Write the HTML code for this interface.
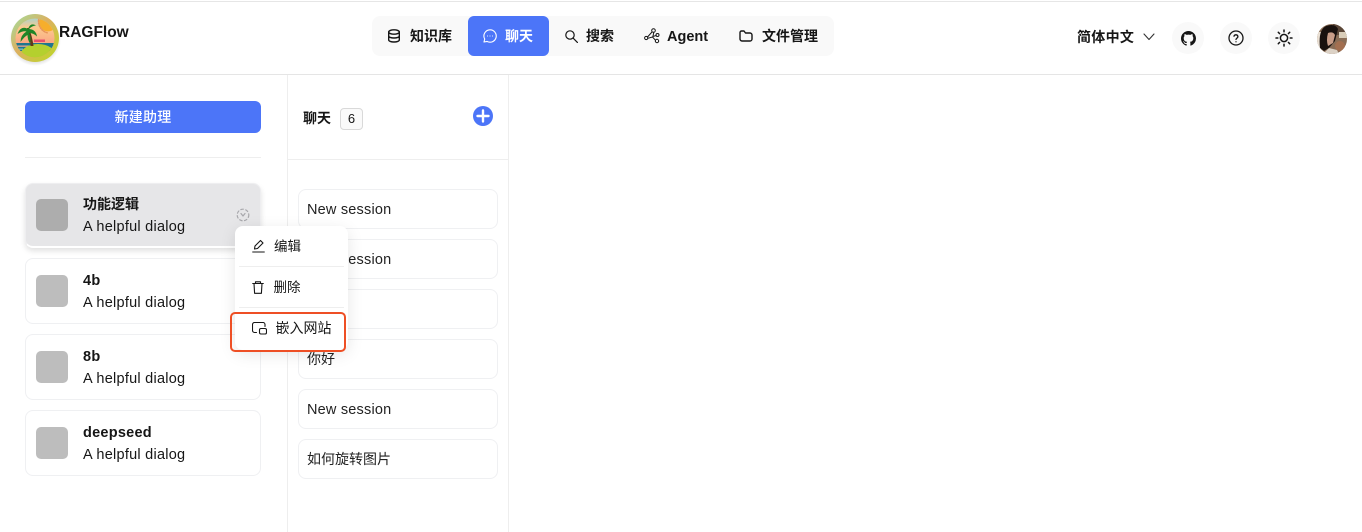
<!DOCTYPE html>
<html lang="zh"><head><meta charset="utf-8"><style>
*{box-sizing:border-box}
html,body{margin:0;padding:0}
body{position:relative;width:1362px;height:532px;overflow:hidden;background:#fff;color:#161616;font-family:"Liberation Sans","Noto Sans CJK SC",sans-serif;font-size:14px}
.a{position:absolute}
.t{position:absolute;white-space:nowrap;line-height:20px}
.b{font-weight:700}
.l{font-size:14.500px;letter-spacing:.25px;margin-top:1px}
.card{position:absolute;left:25px;width:236px;height:66px;background:#fff;border:1px solid #eff0f2;border-radius:8px}
.sq{position:absolute;left:36px;width:32px;height:32px;border-radius:5px;background:#bdbdbd}
.ses{position:absolute;left:298px;width:200px;height:40px;border:1px solid #eff0f2;border-radius:8px;background:#fff;padding-left:8px;line-height:38px;font-size:14px;color:#222}
.sl{font-size:14.500px;letter-spacing:.2px;line-height:40px}
.rb{position:absolute;top:22px;width:32px;height:32px;border-radius:50%;background:#f9f9f9}
svg{position:absolute;fill:none;stroke:#161616;stroke-width:1.4;stroke-linecap:round;stroke-linejoin:round}
</style></head><body>
<div class="a" style="left:0;top:1px;width:1362px;height:1px;background:#e6e6e6"></div>
<div class="a" style="left:0;top:74px;width:1362px;height:1px;background:#e5e5e5"></div>

<svg style="left:9px;top:12px;stroke:none" width="52" height="54" viewBox="0 0 52 54">
<defs><linearGradient id="g" x1="0" y1="0" x2="1" y2="1"><stop offset="0" stop-color="#a0dfa0"/><stop offset=".45" stop-color="#dcb060"/><stop offset="1" stop-color="#b9dc20"/></linearGradient>
<linearGradient id="s" x1="0" y1="0" x2="0" y2="1"><stop offset="0" stop-color="#78d6ee"/><stop offset=".3" stop-color="#fccb8e"/><stop offset=".75" stop-color="#f9967e"/></linearGradient>
<clipPath id="c"><circle cx="26" cy="26" r="19.500"/></clipPath>
<radialGradient id="sh"><stop offset=".8" stop-color="#000" stop-opacity=".14"/><stop offset="1" stop-color="#000" stop-opacity="0"/></radialGradient></defs>
<circle cx="26" cy="28" r="26" fill="url(#sh)"/>
<circle cx="26" cy="26" r="24" fill="url(#g)"/>
<g clip-path="url(#c)"><rect x="0" y="0" width="52" height="52" fill="url(#s)"/>
<path d="M32 5a9 9 0 0 0 12 13l2-14z" fill="#f6ae2c"/>
<path d="M30 6a12 12 0 0 0 9 15" stroke="#e8955a" stroke-width="1.600" stroke-dasharray="1 1.500" fill="none"/>
<rect x="0" y="31" width="52" height="8" fill="#1f7690"/><rect x="0" y="33.500" width="20" height="1.300" fill="#e8a890"/><rect x="0" y="36.500" width="14" height="1.300" fill="#7fc0c8"/>
<ellipse cx="29" cy="44" rx="18" ry="12" fill="#b4d02e"/>
<rect x="25" y="27.500" width="11" height="2.500" fill="#e8506c"/>
<path d="M18 16q3 9 3.500 18l3 0q-1.500-11-4.800-18z" fill="#5f3a18"/>
<path d="M19 17q-7-4-10.500 5q5.500-3.500 9-2.500q-6 3.500-6 10.500q4.500-6 7-7q0 4.500 2.500 8.500q1.500-6-1-10.500q4.500 0 8 3.500q-1-7-8-7.500q3.500-3.500 7-3.500q-5.500-3.500-8 3.500z" fill="#1f8526"/></g>
</svg>
<div class="t b" style="left:59px;top:23px;font-size:15.500px">RAGFlow</div>

<div class="a" style="left:372px;top:16px;width:462px;height:40px;background:#f9f9f9;border-radius:8px"></div>
<div class="a" style="left:468px;top:16px;width:81px;height:40px;background:#4c75f8;border-radius:6px"></div>
<svg style="left:387px;top:29px" width="14" height="14" viewBox="0 0 14 14"><ellipse cx="7" cy="3" rx="5.300" ry="2.200"/><path d="M1.700 3v8c0 1.100 2.400 2 5.300 2s5.300-.9 5.300-2V3M1.700 7c0 1.100 2.400 2 5.300 2s5.300-.9 5.300-2"/></svg>
<div class="t b" style="left:410px;top:26px">知识库</div>
<svg style="left:483px;top:29px;stroke:#fff;stroke-width:1.100" width="14" height="14" viewBox="0 0 14 14"><path d="M7 .8a6.200 6.200 0 1 1-3 11.600L1 13l.7-3A6.200 6.200 0 0 1 7 .8z"/><path d="M4.500 7h.01M7 7h.01M9.500 7h.01"/></svg>
<div class="t b" style="left:505px;top:26px;color:#fff">聊天</div>
<svg style="left:565px;top:30px;stroke-width:1.200" width="13" height="13" viewBox="0 0 13 13"><circle cx="5" cy="5" r="4.200"/><path d="M8.200 8.200L12.400 12.400"/></svg>
<div class="t b" style="left:586px;top:26px">搜索</div>
<svg style="left:644px;top:28px;stroke-width:1" width="16" height="16" viewBox="0 0 16 16"><circle cx="9.500" cy="2.500" r="1.800"/><circle cx="2.200" cy="10" r="1.600"/><circle cx="13.500" cy="7" r="1.500"/><circle cx="13" cy="13" r="1.700"/><path d="M8 4L3.500 9M3.800 10.300L8.500 9L11.400 12.200M9.800 4.300L8.800 9M8.800 8.500L12.200 7.500"/></svg>
<div class="t b" style="left:667px;top:27px;font-size:14.500px">Agent</div>
<svg style="left:739px;top:29px" width="14" height="14" viewBox="0 0 14 14"><path d="M1 3.500a1.500 1.500 0 0 1 1.500-1.500H5l1.500 2h4.500a2 2 0 0 1 2 2v4a2 2 0 0 1-2 2H3a2 2 0 0 1-2-2z"/></svg>
<div class="t b" style="left:762px;top:26px">文件管理</div>

<div class="t b" style="left:1077px;top:27px;letter-spacing:.3px">简体中文</div>
<svg style="left:1143px;top:33px;stroke-width:1.100;stroke:#333" width="12" height="8" viewBox="0 0 12 8"><path d="M1 1l5 5.500L11 1"/></svg>
<div class="rb" style="left:1172px"></div><div class="rb" style="left:1220px"></div><div class="rb" style="left:1268px"></div>
<svg style="left:1180.500px;top:30.500px;fill:#161616;stroke:none" width="15" height="15" viewBox="0 0 16 16"><path d="M8 0C3.580 0 0 3.580 0 8c0 3.540 2.290 6.530 5.470 7.590.4.070.55-.17.550-.38 0-.19-.01-.82-.01-1.490-2.010.37-2.530-.49-2.690-.94-.09-.23-.48-.94-.82-1.130-.28-.15-.68-.52-.01-.53.630-.01 1.080.58 1.230.82.720 1.210 1.870.87 2.330.66.070-.52.280-.87.510-1.070-1.780-.2-3.640-.89-3.640-3.950 0-.87.310-1.590.82-2.150-.08-.2-.36-1.020.08-2.120 0 0 .67-.21 2.200.82.640-.18 1.320-.27 2-.27s1.360.09 2 .27c1.530-1.040 2.200-.82 2.200-.82.440 1.100.16 1.920.08 2.120.51.560.82 1.270.82 2.150 0 3.070-1.870 3.750-3.650 3.950.29.250.54.730.54 1.480 0 1.070-.01 1.930-.01 2.200 0 .21.150.46.550.38A8.010 8.010 0 0 0 16 8c0-4.420-3.580-8-8-8z"/></svg>
<svg style="left:1228px;top:30px;stroke-width:1.300" width="16" height="16" viewBox="0 0 16 16"><circle cx="8" cy="8" r="7"/><path d="M6 6.200a2 2 0 0 1 3.900.5c0 1.300-1.900 1.500-1.900 2.800M8 11.800h.01"/></svg>
<svg style="left:1275px;top:29px;stroke-width:1.500" width="18" height="18" viewBox="0 0 18 18"><circle cx="9" cy="9" r="3.600"/><path d="M9 1v1.800M9 15.200V17M1 9h1.800M15.200 9H17M3.300 3.300l1.300 1.300M13.400 13.400l1.300 1.300M3.300 14.700l1.300-1.300M13.400 4.600l1.300-1.300"/></svg>
<svg style="left:1317px;top:24px;stroke:none" width="30" height="30" viewBox="0 0 30 30"><defs><clipPath id="av"><circle cx="15" cy="15" r="15"/></clipPath></defs><g clip-path="url(#av)"><rect width="30" height="30" fill="#8a6d56"/><rect x="16" y="0" width="14" height="11" fill="#5b4738"/><rect x="22" y="8" width="8" height="6" fill="#d9cdb9"/><path d="M0 30V8h5Q2 16 4 24z" fill="#e9dfd3"/><path d="M3 24Q1 6 9 2q9-3 12 3l-3 12-6 7-5 3z" fill="#19110e"/><path d="M11 9q5-2 7 2l-2 8-5 3q-2-6 0-13z" fill="#c99d88"/><circle cx="23" cy="22" r="5" fill="#a36f50"/><path d="M6 30l6-6 8 2 2 4z" fill="#dcd2c6"/></g></svg>

<div class="a" style="left:287px;top:75px;width:1px;height:457px;background:#eeeeee"></div>
<div class="a" style="left:508px;top:75px;width:1px;height:457px;background:#eeeeee"></div>
<div class="a" style="left:25px;top:101px;width:236px;height:32px;background:#4c75f8;border-radius:6px;color:#fff;text-align:center;line-height:32px;font-weight:500;letter-spacing:.2px">新建助理</div>
<div class="a" style="left:25px;top:157px;width:236px;height:1px;background:#eeeeee"></div>

<div class="card" style="top:183px;height:65px;background:#e6e6e8;border:1px solid #eeeef0;border-bottom:2px solid #fff;box-shadow:0 3px 6px rgba(0,0,0,.12)"></div>
<div class="sq" style="top:199px;background:#adadad"></div>
<div class="t b" style="left:83px;top:194px">功能逻辑</div>
<div class="t l" style="left:83px;top:216px">A helpful dialog</div>
<svg style="left:236px;top:208px;stroke:#a8a8ac;stroke-width:1.200;stroke-dasharray:2.500 2.500" width="14" height="14" viewBox="0 0 14 14"><circle cx="7" cy="7" r="5.800"/><path d="M5 5.500L7 8l2-2.500" stroke-dasharray="none"/></svg>

<div class="card" style="top:258px"></div><div class="sq" style="top:275px"></div>
<div class="t b l" style="left:83px;top:270px">4b</div><div class="t l" style="left:83px;top:292px">A helpful dialog</div>
<div class="card" style="top:334px"></div><div class="sq" style="top:351px"></div>
<div class="t b l" style="left:83px;top:346px">8b</div><div class="t l" style="left:83px;top:368px">A helpful dialog</div>
<div class="card" style="top:410px"></div><div class="sq" style="top:427px"></div>
<div class="t b l" style="left:83px;top:422px">deepseed</div><div class="t l" style="left:83px;top:444px">A helpful dialog</div>

<div class="t b" style="left:303px;top:108px">聊天</div>
<div class="a" style="left:340px;top:108px;width:23px;height:22px;border:1px solid #d9d9d9;border-radius:4px;background:#fafafa;text-align:center;font-size:13px;line-height:20px">6</div>
<svg style="left:473px;top:106px;stroke:none" width="20" height="20" viewBox="0 0 20 20"><circle cx="10" cy="10" r="10" fill="#4c75f8"/><path d="M10 4.500v11M4.500 10h11" stroke="#fff" stroke-width="2.400" stroke-linecap="round"/></svg>
<div class="a" style="left:288px;top:159px;width:220px;height:1px;background:#eeeeee"></div>

<div class="ses sl" style="top:189px">New session</div>
<div class="ses sl" style="top:239px">New session</div>
<div class="ses" style="top:289px">你好</div>
<div class="ses" style="top:339px">你好</div>
<div class="ses sl" style="top:389px">New session</div>
<div class="ses" style="top:439px">如何旋转图片</div>

<div class="a" style="left:235px;top:226px;width:113px;height:124px;background:#fff;border-radius:8px;box-shadow:0 4px 16px rgba(0,0,0,.1)"></div>
<div class="a" style="left:239px;top:266px;width:105px;height:1px;background:#eeeeee"></div>
<div class="a" style="left:239px;top:307px;width:105px;height:1px;background:#eeeeee"></div>
<svg style="left:252px;top:239px;stroke-width:1.100" width="13" height="14" viewBox="0 0 13 14"><path d="M.7 13h11.600M2.500 10l.5-3L8.500 1.500 11 4 5.500 9.500z"/></svg>
<div class="t" style="left:274px;top:237px;font-size:13.500px">编辑</div>
<svg style="left:252px;top:281px;stroke-width:1.100" width="12" height="13" viewBox="0 0 12 13"><path d="M.7 2.500h10.600M3.500 2.500V.8h5v1.700M2 2.500l.6 9.800h6.800l.6-9.800"/></svg>
<div class="t" style="left:273.500px;top:278px;font-size:13.500px">删除</div>
<svg style="left:252px;top:322px;stroke-width:1.100" width="15" height="13" viewBox="0 0 15 13"><path d="M4.500 10.500H2.500a2 2 0 0 1-2-2V2.500a2 2 0 0 1 2-2h8.500a2 2 0 0 1 2 2v2"/><rect x="7.500" y="6.500" width="7" height="5.500" rx="1.500"/></svg>
<div class="t" style="left:275.500px;top:318px;font-size:14px">嵌入网站</div>
<div class="a" style="left:230px;top:312px;width:116px;height:40px;border:2.500px solid #ee4f25;border-radius:5px"></div>
</body></html>
